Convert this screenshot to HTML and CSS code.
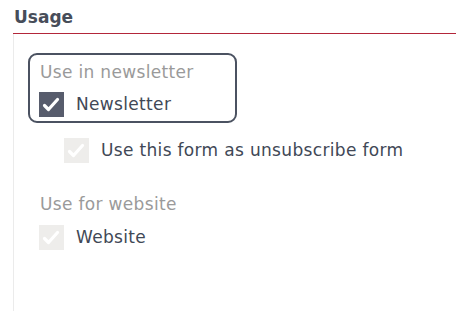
FILE: index.html
```html
<!DOCTYPE html>
<html>
<head>
<meta charset="utf-8">
<link rel="stylesheet" href="styles.css">
</head>
<body>
<div class="section">
  <h2 class="title">Usage</h2>
  <div class="panel">
    <div class="group group-active">
      <div class="legend">Use in newsletter</div>
      <div class="row">
        <span class="cb cb-on"><svg viewBox="0 0 25 25" width="25" height="25"><polyline points="5.5,13.5 9.5,17.5 18.5,7.5" fill="none" stroke="#fff" stroke-width="3.2" stroke-linecap="round" stroke-linejoin="round"/></svg></span>
        <span class="label">Newsletter</span>
      </div>
    </div>
    <div class="row sub">
      <span class="cb cb-off"><svg viewBox="0 0 25 25" width="25" height="25"><polyline points="5.5,13.5 9.5,17.5 18.5,7.5" fill="none" stroke="#fff" stroke-width="3.2" stroke-linecap="round" stroke-linejoin="round"/></svg></span>
      <span class="label">Use this form as unsubscribe form</span>
    </div>
    <div class="group group-plain">
      <div class="legend">Use for website</div>
      <div class="row">
        <span class="cb cb-off"><svg viewBox="0 0 25 25" width="25" height="25"><polyline points="5.5,13.5 9.5,17.5 18.5,7.5" fill="none" stroke="#fff" stroke-width="3.2" stroke-linecap="round" stroke-linejoin="round"/></svg></span>
        <span class="label">Website</span>
      </div>
    </div>
  </div>
</div>
</body>
</html>
```
FILE: styles.css
```css
html, body {
  margin: 0;
  padding: 0;
  background: #ffffff;
}
body {
  font-family: "DejaVu Sans", Verdana, sans-serif;
  font-size: 17px;
  color: #414856;
  width: 456px;
  height: 311px;
  overflow: hidden;
}
.section {
  margin-left: 13px;
}
.title {
  margin: 0;
  padding: 7px 0 6px 1px;
  font-size: 17px;
  line-height: 20px;
  font-weight: bold;
  color: #474d59;
  border-bottom: 1px solid #b3263a;
}
.panel {
  border-left: 1px solid #ebebeb;
  padding: 19px 0 0 14px;
  height: 277px;
  box-sizing: border-box;
}
.group {
  width: 205px;
  border: 2px solid transparent;
  border-radius: 9px;
  padding: 5px 0 4px 9px;
  box-sizing: content-box;
}
.group-active {
  border-color: #4b5261;
  width: 196px;
}
.group-plain {
  margin-top: 22px;
}
.group-plain .row {
  margin-top: 9px;
}
.legend {
  line-height: 24px;
  color: #9a9a9a;
  padding-left: 1px;
  letter-spacing: 0.33px;
}
.row {
  display: flex;
  align-items: center;
  gap: 12px;
  margin-top: 8px;
  line-height: 25px;
}
.sub {
  margin-top: 15px;
  margin-left: 36px;
}
.cb {
  width: 25px;
  height: 25px;
  flex: 0 0 25px;
  display: block;
}
.cb svg {
  display: block;
}
.cb-on {
  background: #575c6c;
}
.cb-off {
  background: #eeedeb;
}
.label {
  white-space: nowrap;
  letter-spacing: 0.33px;
}
```
